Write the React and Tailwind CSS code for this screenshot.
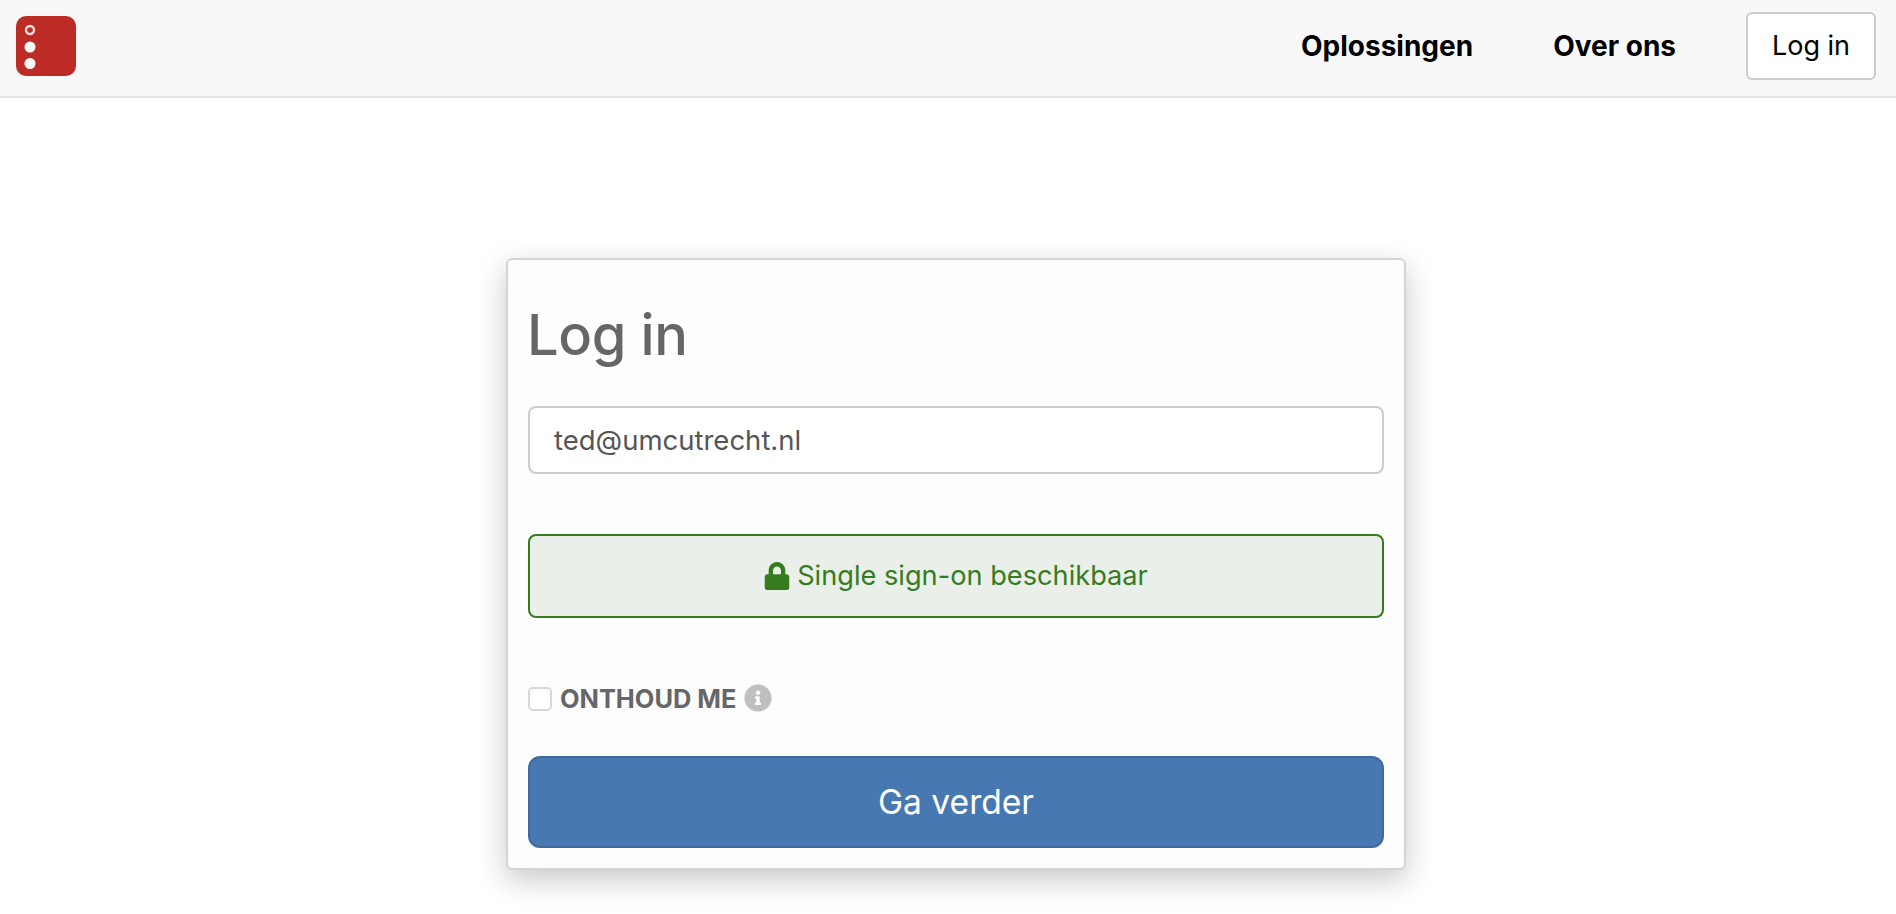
import React from "react";
import { FaLock, FaInfoCircle } from "react-icons/fa";

function Logo() {
  return (
    <svg width="60" height="60" viewBox="0 0 60 60">
      <rect width="60" height="60" rx="10" fill="#bd2b27" />
      <circle cx="14" cy="14" r="4" fill="none" stroke="#f6dcdb" strokeWidth="2.4" />
      <circle cx="14" cy="31" r="5.5" fill="#ffffff" />
      <circle cx="14" cy="47.5" r="5.5" fill="#ffffff" />
    </svg>
  );
}

export default function App() {
  return (
    <div className="min-h-[914px] bg-white font-['Inter',sans-serif] overflow-hidden">
      <header className="h-[98px] bg-[#f8f8f8] border-b-2 border-[#e4e4e4] flex items-center justify-between pl-4 pr-5 pb-1">
        <Logo />
        <nav className="flex items-center">
          <a className="text-[28px] font-bold text-black mr-[80px]">Oplossingen</a>
          <a className="text-[28px] font-bold text-black mr-[70px]">Over ons</a>
          <button className="w-[130px] h-[68px] bg-white border-2 border-[#cccccc] rounded-md text-[27px] text-black">
            Log in
          </button>
        </nav>
      </header>

      <main className="flex justify-center pl-4 pt-[160px]">
        <div className="w-[900px] h-[612px] bg-[#fdfdfd] border-2 border-[#d4d4d4] rounded-md shadow-[0_10px_30px_rgba(0,0,0,0.22)] px-5">
          <h1 className="text-[56px] leading-none font-[540] tracking-[-0.4px] text-[#666666] mt-[47px] mb-[43px] -ml-[1px]">Log in</h1>

          <input
            readOnly
            value="ted@umcutrecht.nl"
            className="block w-full h-[68px] bg-white border-2 border-[#cccccc] rounded-lg px-[24px] text-[27.5px] text-[#555555] outline-none"
          />

          <div className="mt-[60px] h-[84px] bg-[#eaefe9] border-2 border-[#367c1f] rounded-lg flex items-center justify-center gap-[7px] text-[27.2px] text-[#367c1f]">
            <FaLock className="w-[26px] h-[28px]" />
            <span>Single sign-on beschikbaar</span>
          </div>

          <div className="mt-[67px] flex items-center h-[28px]">
            <span className="w-6 h-6 bg-white border-2 border-[#d8d8d8] rounded-[5px] mr-2"></span>
            <span className="font-bold text-[25.4px] text-[#666666]">ONTHOUD ME</span>
            <FaInfoCircle className="w-[28px] h-[28px] text-[#bfbfbf] ml-2 -mt-[3px]" />
          </div>

          <button className="mt-[43px] w-full h-[92px] bg-[#4878b2] border-2 border-[#41699b] rounded-xl text-white text-[33.6px]">
            Ga verder
          </button>
        </div>
      </main>
    </div>
  );
}
